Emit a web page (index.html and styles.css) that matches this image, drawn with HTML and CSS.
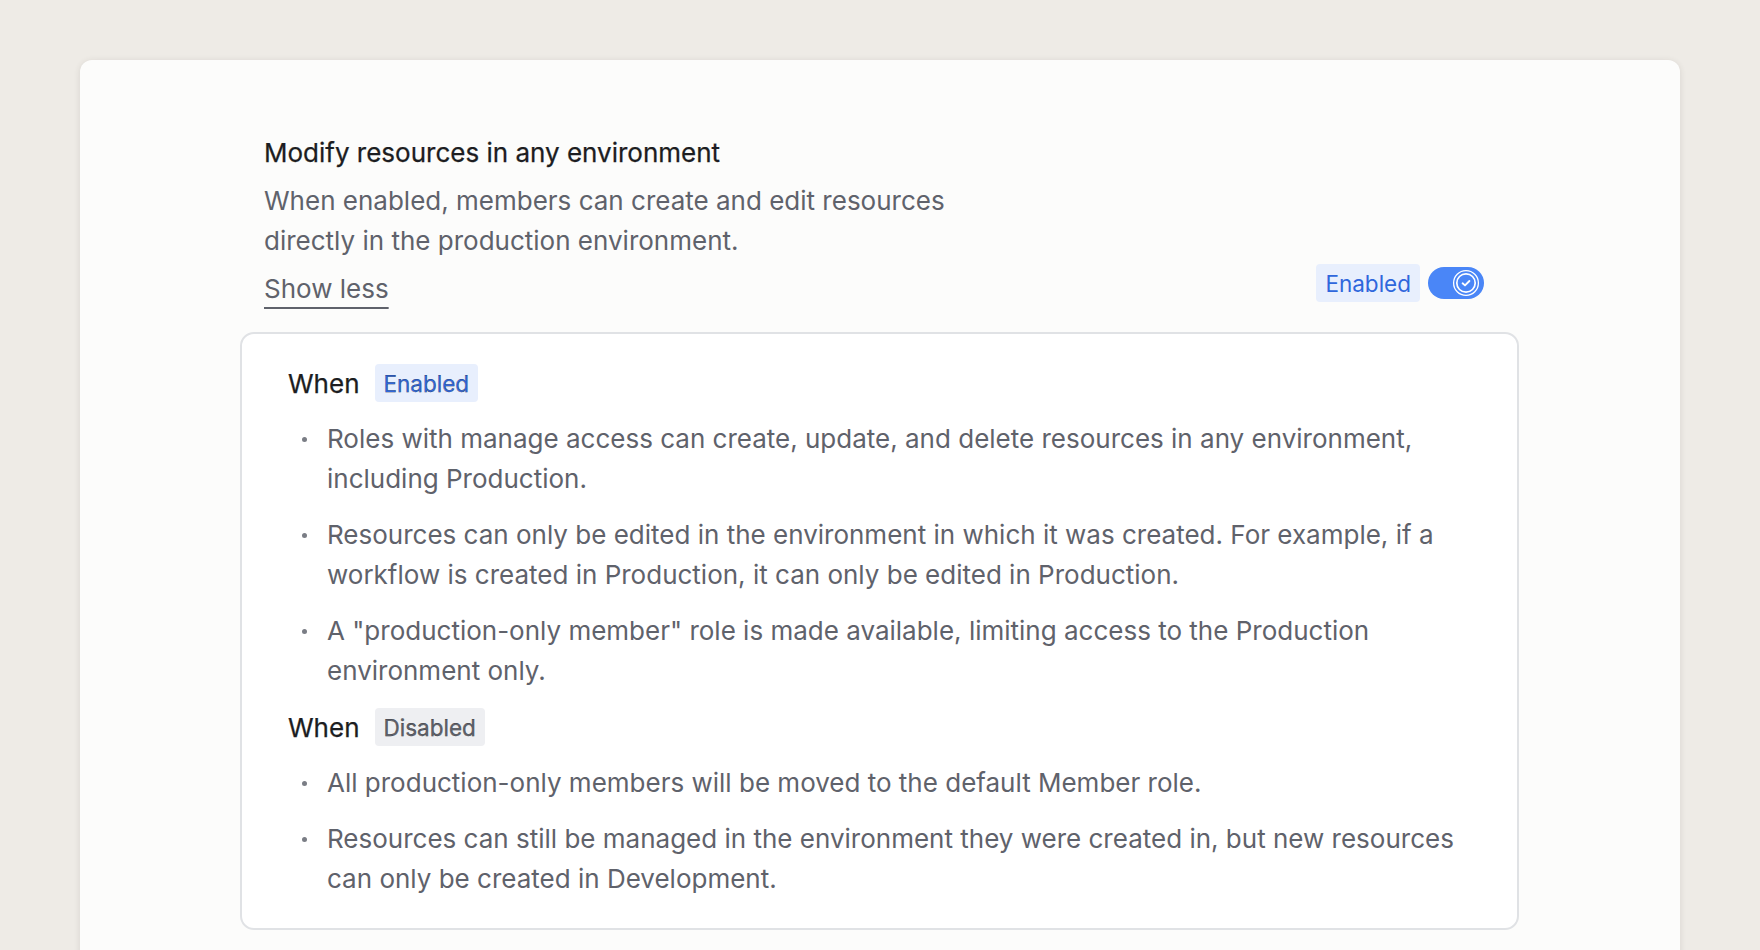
FILE: index.html
```html
<!DOCTYPE html>
<html lang="en">
  <head>
    <title>Environment settings</title>
    <link rel="stylesheet" href="styles.css">
  </head>

  <body>
    <div class="Page">
      <div class="Card">
        <div class="Setting">
          <!-- Header row -->
          <div class="SettingHead">
            <div class="SettingText">
              <h2>Modify resources in any environment</h2>
              <p>
                When enabled, members can create and edit resources<br />
                directly in the production environment.
              </p>
              <a href="#" class="ShowLess">Show less</a>
            </div>

            <div class="Toggle">
              <span class="Chip">Enabled</span>
              <!-- switch (on) -->
              <svg class="Switch" width="56" height="32" viewBox="0 0 56 32">
                <rect x="0" y="0" width="56" height="32" rx="16" fill="#4a86f7" />
                <circle cx="38" cy="16" r="12.4" fill="none" stroke="#fff" stroke-width="1.3" />
                <circle cx="38" cy="16" r="9.2" fill="none" stroke="#fff" stroke-width="1.7" />
                <path d="M34.6 16.3 L37 18.4 L41.4 14" fill="none" stroke="#fff" stroke-width="1.9" stroke-linecap="round" stroke-linejoin="round" />
              </svg>
            </div>
          </div>

          <!-- Details -->
          <div class="Details">
            <div class="When">
              When <span class="Chip">Enabled</span>
            </div>
            <ul>
              <li>Roles with manage access can create, update, and delete resources in any environment, including Production.</li>
              <li>Resources can only be edited in the environment in which it was created. For example, if a workflow is created in Production, it can only be edited in Production.</li>
              <li>A "production-only member" role is made available, limiting access to the Production environment only.</li>
            </ul>

            <div class="When">
              When <span class="Chip Chip--grey">Disabled</span>
            </div>
            <ul>
              <li>All production-only members will be moved to the default Member role.</li>
              <li>Resources can still be managed in the environment they were created in, but new resources can only be created in Development.</li>
            </ul>
          </div>
        </div>
      </div>
    </div>
  </body>
</html>
```

FILE: styles.css
```css
body {
  margin: 0;
  background-color: #eeebe6;
  font-family: Inter, "Noto Sans", sans-serif;
  overflow: hidden;
}

.Page {
  padding: 60px 80px 0;
}

.Card {
  min-height: 1000px;
  background-color: #fcfcfb;
  border-radius: 12px;
  box-shadow: 0 1px 6px rgba(60, 50, 40, 0.12);
  padding: 73px 161px 0 160px;
}

.SettingHead {
  display: flex;
  justify-content: space-between;
  align-items: flex-end;
  padding: 0 35px 0 24px;
}

.SettingText {
  display: flex;
  flex-direction: column;
  align-items: flex-start;
  gap: 8px;
}

.SettingText h2 {
  margin: 0;
  font-size: 26px;
  font-weight: 400;
  line-height: 40px;
  color: #1c1d21;
  -webkit-text-stroke: 0.25px #1c1d21;
}

.SettingText p {
  margin: 0;
  font-size: 26px;
  line-height: 40px;
  color: #5f626b;
}

.ShowLess {
  font-size: 26px;
  line-height: 40px;
  color: #5f626b;
  text-decoration: underline;
  text-decoration-thickness: 2px;
  text-underline-offset: 9px;
}

.Toggle {
  display: flex;
  align-items: center;
  gap: 8px;
  margin-bottom: 7px;
}

.Chip {
  display: inline-flex;
  align-items: center;
  height: 38px;
  padding: 0 9px;
  border-radius: 4px;
  background-color: #e8effd;
  color: #2f67dc;
  font-size: 22.5px;
  font-weight: 400;
}

.Chip--grey {
  background-color: #eeeff2;
  color: #5f626b;
}

.Switch {
  display: block;
}

.Details {
  display: flex;
  flex-direction: column;
  gap: 16px;
  margin-top: 23px;
  background-color: #fff;
  border: 2px solid #e0e2e5;
  border-radius: 14px;
  padding: 29px 40px 29px 46px;
}

.When {
  display: flex;
  align-items: center;
  gap: 15px;
  height: 40px;
  font-size: 26px;
  font-weight: 400;
  color: #1c1d21;
  -webkit-text-stroke: 0.25px #1c1d21;
}

.Details ul {
  display: flex;
  flex-direction: column;
  gap: 16px;
  margin: 0;
  padding: 0;
}

.Details li {
  list-style: none;
  position: relative;
  padding-left: 39px;
  font-size: 26px;
  line-height: 40px;
  color: #5f626b;
}

.Details li::before {
  content: "";
  position: absolute;
  left: 14px;
  top: 18px;
  width: 5px;
  height: 5px;
  border-radius: 50%;
  background-color: #7a7d85;
}
```
